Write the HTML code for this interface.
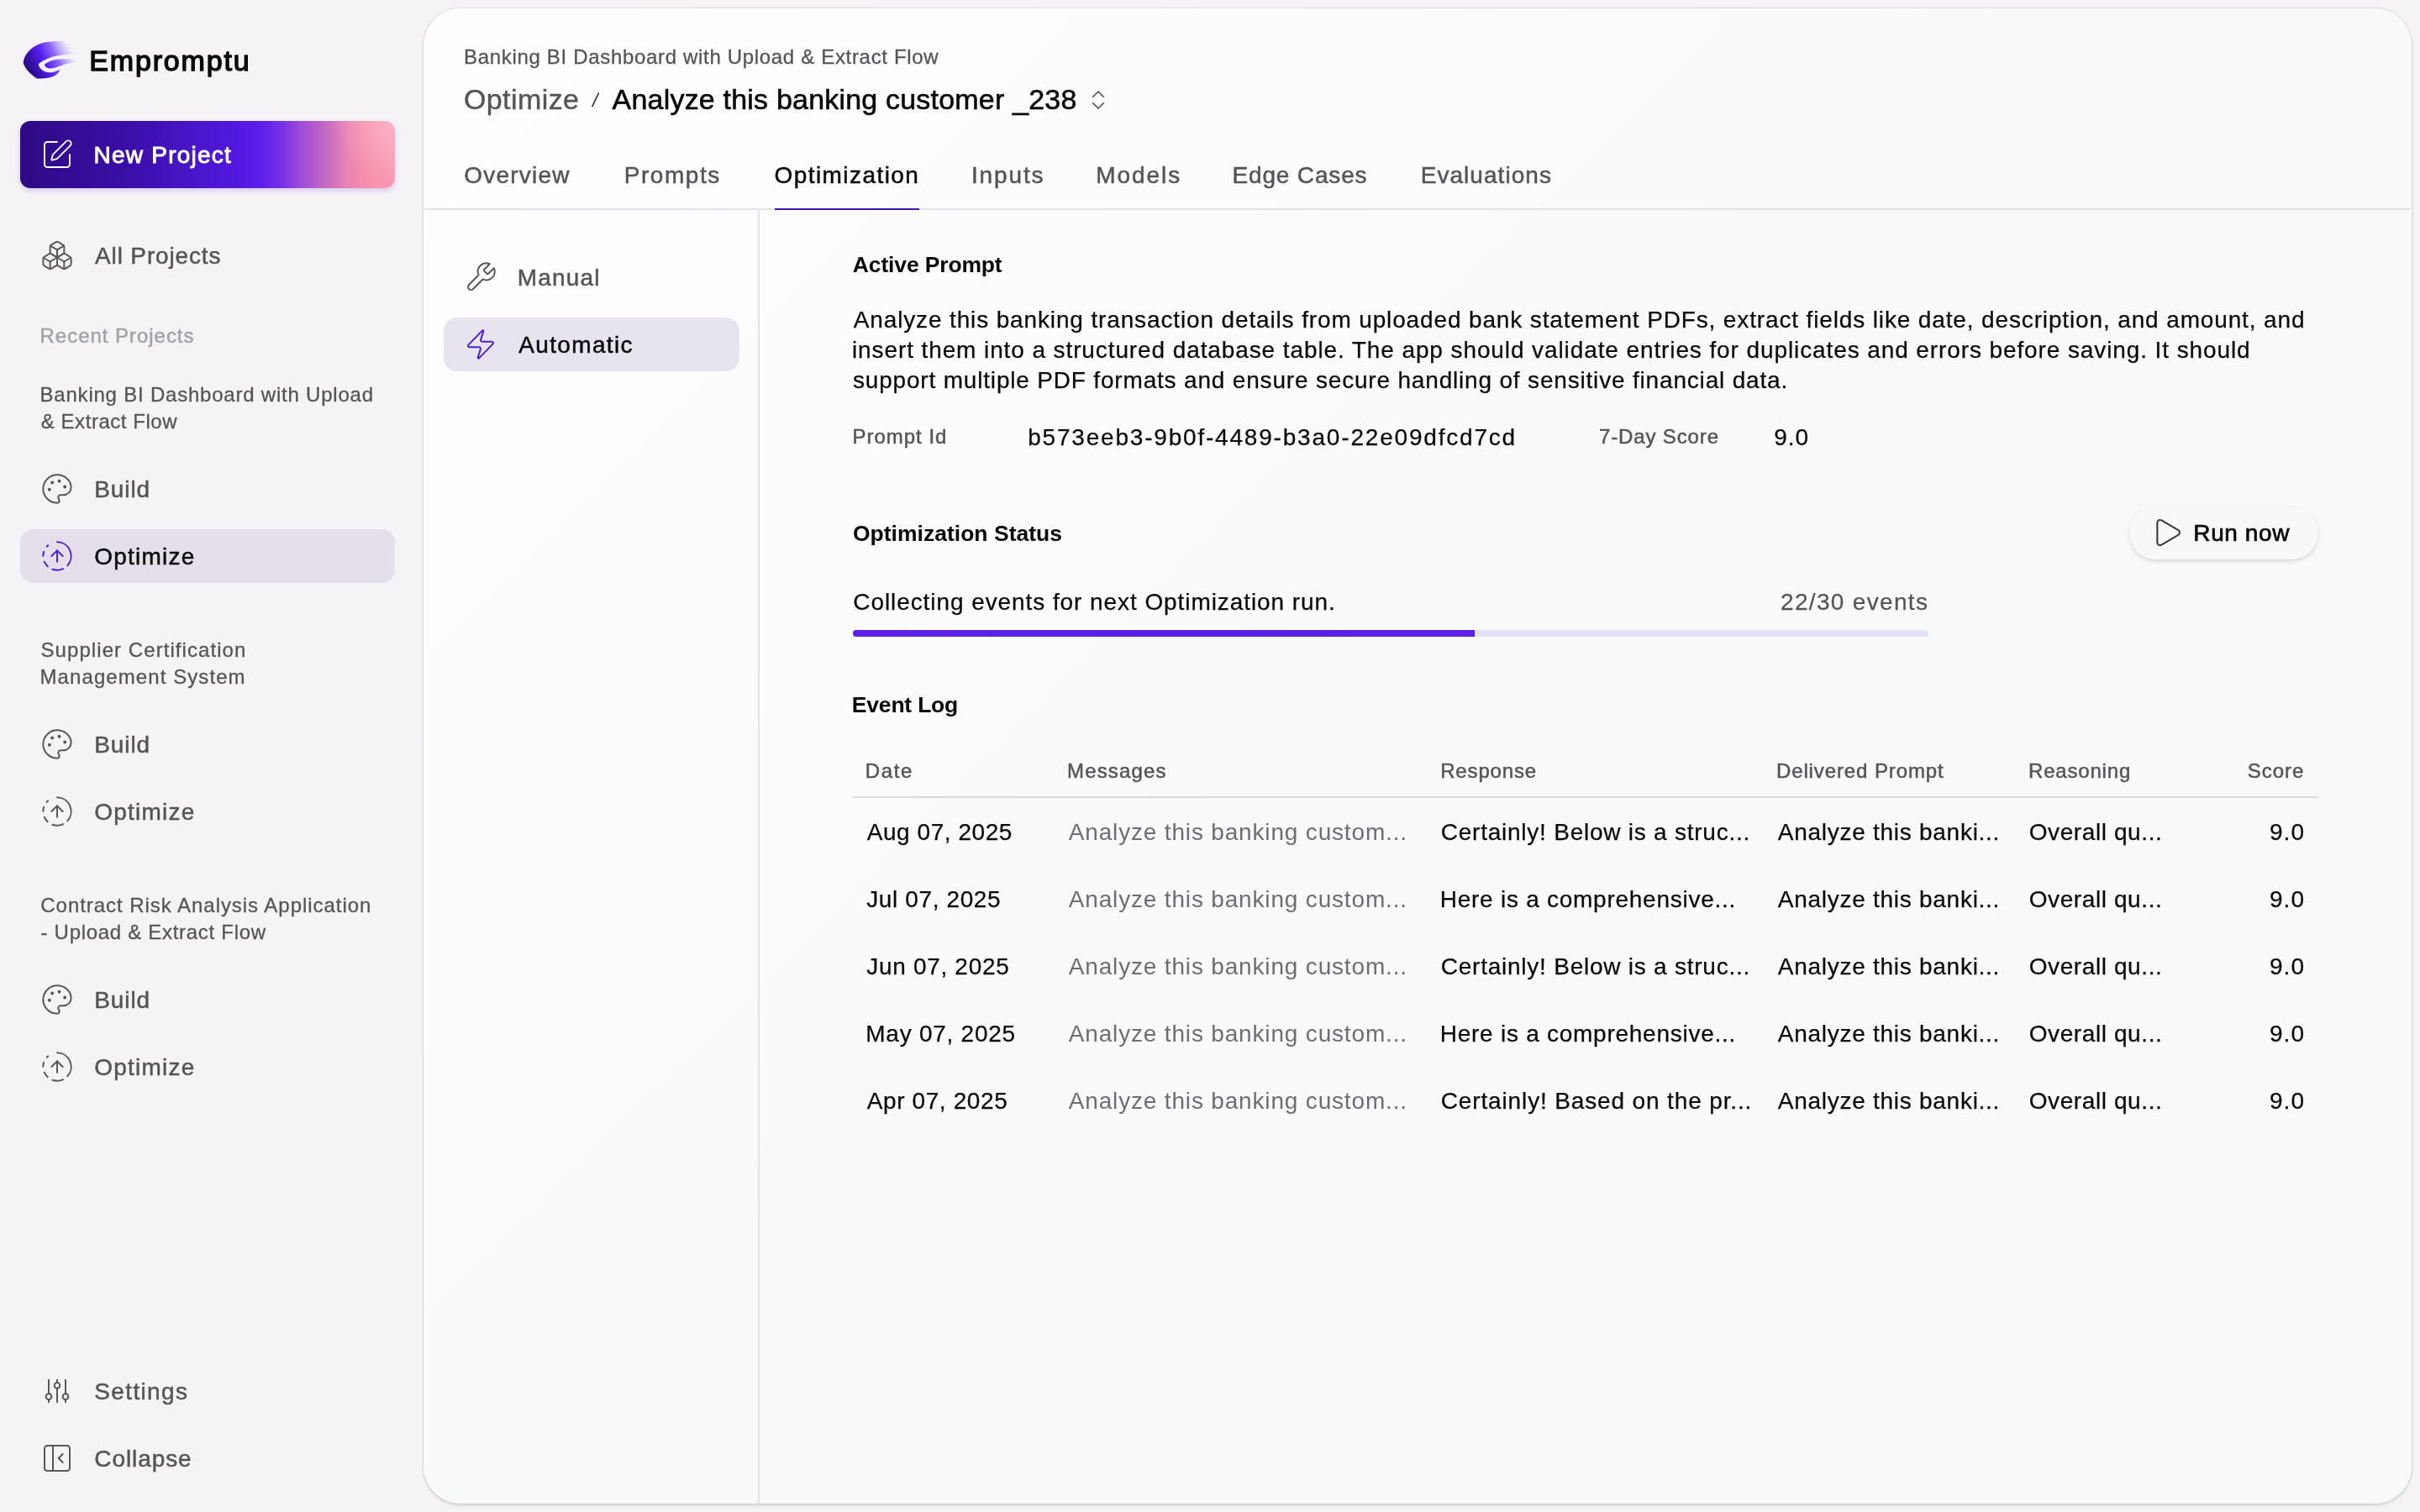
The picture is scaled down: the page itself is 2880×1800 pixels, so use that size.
<!DOCTYPE html>
<html lang="en"><head><meta charset="utf-8"><title>Empromptu - Optimize</title>
<style>
html,body{margin:0;padding:0;}
body{width:2880px;height:1800px;overflow:hidden;position:relative;background:#f5f3f6;font-family:"Liberation Sans",sans-serif;}
.t{position:absolute;white-space:nowrap;display:block;-webkit-font-smoothing:antialiased;}
.i{position:absolute;display:block;overflow:visible;}
.b{position:absolute;display:block;}
#w{position:absolute;left:0;top:0;width:2880px;height:1800px;will-change:transform;}
</style></head><body><div id="w">
<div class="b" style="left:504px;top:10px;width:2366px;height:1780px;background:linear-gradient(135deg,#fefdff 0%,#fcfcfd 25%,#f8faf9 45%,#f8f9f9 100%);border-radius:44px;box-shadow:0 0 0 1.5px rgba(0,0,20,0.075), 0 3px 4px rgba(0,0,0,0.09);"></div>
<div class="b" style="left:505px;top:248px;width:2364px;height:2px;background:#e2e2e6;"></div>
<div class="b" style="left:902px;top:250px;width:2px;height:1540px;background:#e3e3e6;"></div>
<div class="b" style="left:922px;top:248px;width:172px;height:2px;background:#3d19a8;"></div>
<svg class="i" style="left:20px;top:40px" width="90" height="60" viewBox="20 40 90 60"><defs><linearGradient id="lg" gradientUnits="userSpaceOnUse" x1="29" y1="88" x2="89" y2="57"><stop offset="0" stop-color="#220967"/><stop offset=".2" stop-color="#370fa6"/><stop offset=".42" stop-color="#571ef0"/><stop offset=".64" stop-color="#8f6af6"/><stop offset=".85" stop-color="#c6b7fa" stop-opacity=".55"/><stop offset="1" stop-color="#e4dcfc" stop-opacity="0"/></linearGradient></defs><path fill="url(#lg)" d="M27.9 72.9C29.5 64 37 56 47.8 51.9C57 48.8 68 48.6 78 49.3L73 51.6L84.5 52.6L77 55.2L88 57.6L80 60L88.5 61.5L84 64.8C76 64.8 65 66.2 55.7 70.2C50 72.7 46.2 75 45.8 77.3C46.4 80.5 49.5 83.4 53.5 85.3C58 87.3 64 86.3 71.6 82.7C70 86.5 67 89.2 63.7 90.8C58 93.4 50 93.8 43.8 93.2C38 90 32 84 29.5 79C28 76.5 27.7 74.5 27.9 72.9Z"/><path fill="url(#lg)" d="M52.9 77.3C55 74.5 60 72 66 70.9C72 69.9 79 70 84 70.6C87 71 90 72.3 91.4 73.7C86 74.2 80 75.3 75 77.3C69 79.8 63 81.8 58.5 81.4C55.5 81 53.5 79.3 52.9 77.3Z"/><path d="M37 83L44 93.4" stroke="#2a0b78" stroke-width="1" fill="none" stroke-linecap="round"/></svg>
<span class="t" style="left:106.25px;top:55px;font-size:34px;line-height:34px;color:#09090b;letter-spacing:1.844px;-webkit-text-stroke:1.4px #09090b;">Empromptu</span>
<div class="b" style="left:24px;top:144px;width:446px;height:80px;border-radius:12px;background:radial-gradient(circle at 100% 0%,rgba(255,200,215,0.55) 0%,rgba(255,200,215,0) 16%),linear-gradient(90deg,#2d0a84 0%,#3a0ea6 28%,#5118dc 56%,#5a1eea 64%,#7a30e6 70%,#a44fd6 75.6%,#c267c6 81%,#e582b4 86.7%,#f58fa9 92%,#f99ab0 100%);box-shadow:0 3px 6px rgba(120,60,200,0.22);"></div>
<svg class="i" style="left:48.00px;top:164.00px;color:#ffffff" width="40" height="40" viewBox="0 0 24 24" fill="none" stroke="currentColor" stroke-width="1.1" stroke-linecap="round" stroke-linejoin="round"><path d="M12 3H5a2 2 0 0 0-2 2v14a2 2 0 0 0 2 2h14a2 2 0 0 0 2-2v-7"/><path d="M18.375 2.625a1 1 0 0 1 3 3l-9.013 9.014a2 2 0 0 1-.853.505l-2.873.84a.5.5 0 0 1-.62-.62l.84-2.873a2 2 0 0 1 .506-.852z"/></svg>
<span class="t" style="left:111.50px;top:171px;font-size:28px;line-height:28px;color:#ffffff;letter-spacing:1.235px;-webkit-text-stroke:0.9px #ffffff;">New Project</span>
<svg class="i" style="left:48.00px;top:284.00px;color:#58585c" width="40" height="40" viewBox="0 0 24 24" fill="none" stroke="currentColor" stroke-width="1.2" stroke-linecap="round" stroke-linejoin="round"><path d="M2.97 12.92A2 2 0 0 0 2 14.63v3.24a2 2 0 0 0 .97 1.71l3 1.8a2 2 0 0 0 2.06 0L12 19v-5.5l-5-3-4.03 2.42Z"/><path d="m7 16.5-4.74-2.85"/><path d="m7 16.5 5-3"/><path d="M7 16.5v5.17"/><path d="M12 13.5V19l3.97 2.38a2 2 0 0 0 2.06 0l3-1.8a2 2 0 0 0 .97-1.71v-3.24a2 2 0 0 0-.97-1.71L17 10.5l-5 3Z"/><path d="m17 16.5-5-3"/><path d="m17 16.5 4.74-2.85"/><path d="M17 16.5v5.17"/><path d="M7.97 4.42A2 2 0 0 0 7 6.13v4.37l5 3 5-3V6.13a2 2 0 0 0-.97-1.71l-3-1.8a2 2 0 0 0-2.06 0l-3 1.8Z"/><path d="M12 8 7.26 5.15"/><path d="m12 8 4.74-2.85"/><path d="M12 13.5V8"/></svg>
<span class="t" style="left:113.05px;top:291px;font-size:28px;line-height:28px;color:#555558;letter-spacing:0.855px;-webkit-text-stroke:0.5px #555558;">All Projects</span>
<span class="t" style="left:47.55px;top:388px;font-size:24px;line-height:24px;color:#a2a2a8;letter-spacing:0.968px;-webkit-text-stroke:0.5px #a2a2a8;">Recent Projects</span>
<span class="t" style="left:47.55px;top:458px;font-size:24px;line-height:24px;color:#555558;letter-spacing:0.782px;-webkit-text-stroke:0.3px #555558;">Banking BI Dashboard with Upload</span>
<span class="t" style="left:48.80px;top:490px;font-size:24px;line-height:24px;color:#555558;letter-spacing:0.546px;-webkit-text-stroke:0.3px #555558;">&amp; Extract Flow</span>
<svg class="i" style="left:48.00px;top:562.00px;color:#58585c" width="40" height="40" viewBox="0 0 24 24" fill="none" stroke="currentColor" stroke-width="1.2" stroke-linecap="round" stroke-linejoin="round"><circle cx="13.5" cy="6.5" r=".6" fill="currentColor"/><circle cx="17.5" cy="10.5" r=".6" fill="currentColor"/><circle cx="8.5" cy="7.5" r=".6" fill="currentColor"/><circle cx="6.5" cy="12.5" r=".6" fill="currentColor"/><path d="M12 2C6.5 2 2 6.5 2 12s4.5 10 10 10c.926 0 1.648-.746 1.648-1.688 0-.437-.18-.835-.437-1.125-.29-.289-.438-.652-.438-1.125a1.64 1.64 0 0 1 1.668-1.668h1.996c3.051 0 5.555-2.503 5.555-5.554C21.965 6.012 17.461 2 12 2z"/></svg>
<span class="t" style="left:112.30px;top:569px;font-size:28px;line-height:28px;color:#555558;letter-spacing:0.887px;-webkit-text-stroke:0.5px #555558;">Build</span>
<div class="b" style="left:24px;top:630.0px;width:446px;height:64px;border-radius:16px;background:#e4dfea;"></div>
<svg class="i" style="left:48.00px;top:642.00px;color:#4f1fd6" width="40" height="40" viewBox="0 0 24 24" fill="none" stroke="currentColor" stroke-width="1.2" stroke-linecap="round" stroke-linejoin="round"><path d="M12 2a10 10 0 0 1 7.38 16.75"/><path d="m16 12-4-4-4 4"/><path d="M12 16V8"/><path d="M2.5 8.875a10 10 0 0 0-.5 3"/><path d="M2.83 16a10 10 0 0 0 2.43 3.4"/><path d="M4.636 5.235a10 10 0 0 1 .891-.857"/><path d="M8.644 21.42a10 10 0 0 0 7.631-.38"/></svg>
<span class="t" style="left:112.30px;top:649px;font-size:28px;line-height:28px;color:#0a0a0a;letter-spacing:1.221px;-webkit-text-stroke:0.5px #0a0a0a;">Optimize</span>
<span class="t" style="left:48.55px;top:762px;font-size:24px;line-height:24px;color:#555558;letter-spacing:1.064px;-webkit-text-stroke:0.3px #555558;">Supplier Certification</span>
<span class="t" style="left:47.55px;top:794px;font-size:24px;line-height:24px;color:#555558;letter-spacing:1.078px;-webkit-text-stroke:0.3px #555558;">Management System</span>
<svg class="i" style="left:48.00px;top:866.00px;color:#58585c" width="40" height="40" viewBox="0 0 24 24" fill="none" stroke="currentColor" stroke-width="1.2" stroke-linecap="round" stroke-linejoin="round"><circle cx="13.5" cy="6.5" r=".6" fill="currentColor"/><circle cx="17.5" cy="10.5" r=".6" fill="currentColor"/><circle cx="8.5" cy="7.5" r=".6" fill="currentColor"/><circle cx="6.5" cy="12.5" r=".6" fill="currentColor"/><path d="M12 2C6.5 2 2 6.5 2 12s4.5 10 10 10c.926 0 1.648-.746 1.648-1.688 0-.437-.18-.835-.437-1.125-.29-.289-.438-.652-.438-1.125a1.64 1.64 0 0 1 1.668-1.668h1.996c3.051 0 5.555-2.503 5.555-5.554C21.965 6.012 17.461 2 12 2z"/></svg>
<span class="t" style="left:112.30px;top:873px;font-size:28px;line-height:28px;color:#555558;letter-spacing:0.887px;-webkit-text-stroke:0.5px #555558;">Build</span>
<svg class="i" style="left:48.00px;top:946.00px;color:#58585c" width="40" height="40" viewBox="0 0 24 24" fill="none" stroke="currentColor" stroke-width="1.2" stroke-linecap="round" stroke-linejoin="round"><path d="M12 2a10 10 0 0 1 7.38 16.75"/><path d="m16 12-4-4-4 4"/><path d="M12 16V8"/><path d="M2.5 8.875a10 10 0 0 0-.5 3"/><path d="M2.83 16a10 10 0 0 0 2.43 3.4"/><path d="M4.636 5.235a10 10 0 0 1 .891-.857"/><path d="M8.644 21.42a10 10 0 0 0 7.631-.38"/></svg>
<span class="t" style="left:112.30px;top:953px;font-size:28px;line-height:28px;color:#555558;letter-spacing:1.221px;-webkit-text-stroke:0.5px #555558;">Optimize</span>
<span class="t" style="left:48.30px;top:1066px;font-size:24px;line-height:24px;color:#555558;letter-spacing:0.956px;-webkit-text-stroke:0.3px #555558;">Contract Risk Analysis Application</span>
<span class="t" style="left:48.55px;top:1098px;font-size:24px;line-height:24px;color:#555558;letter-spacing:0.702px;-webkit-text-stroke:0.3px #555558;">- Upload &amp; Extract Flow</span>
<svg class="i" style="left:48.00px;top:1170.20px;color:#58585c" width="40" height="40" viewBox="0 0 24 24" fill="none" stroke="currentColor" stroke-width="1.2" stroke-linecap="round" stroke-linejoin="round"><circle cx="13.5" cy="6.5" r=".6" fill="currentColor"/><circle cx="17.5" cy="10.5" r=".6" fill="currentColor"/><circle cx="8.5" cy="7.5" r=".6" fill="currentColor"/><circle cx="6.5" cy="12.5" r=".6" fill="currentColor"/><path d="M12 2C6.5 2 2 6.5 2 12s4.5 10 10 10c.926 0 1.648-.746 1.648-1.688 0-.437-.18-.835-.437-1.125-.29-.289-.438-.652-.438-1.125a1.64 1.64 0 0 1 1.668-1.668h1.996c3.051 0 5.555-2.503 5.555-5.554C21.965 6.012 17.461 2 12 2z"/></svg>
<span class="t" style="left:112.30px;top:1177px;font-size:28px;line-height:28px;color:#555558;letter-spacing:0.887px;-webkit-text-stroke:0.5px #555558;">Build</span>
<svg class="i" style="left:48.00px;top:1250.20px;color:#58585c" width="40" height="40" viewBox="0 0 24 24" fill="none" stroke="currentColor" stroke-width="1.2" stroke-linecap="round" stroke-linejoin="round"><path d="M12 2a10 10 0 0 1 7.38 16.75"/><path d="m16 12-4-4-4 4"/><path d="M12 16V8"/><path d="M2.5 8.875a10 10 0 0 0-.5 3"/><path d="M2.83 16a10 10 0 0 0 2.43 3.4"/><path d="M4.636 5.235a10 10 0 0 1 .891-.857"/><path d="M8.644 21.42a10 10 0 0 0 7.631-.38"/></svg>
<span class="t" style="left:112.30px;top:1257px;font-size:28px;line-height:28px;color:#555558;letter-spacing:1.221px;-webkit-text-stroke:0.5px #555558;">Optimize</span>
<svg class="i" style="left:48.00px;top:1636.00px;color:#58585c" width="40" height="40" viewBox="0 0 24 24" fill="none" stroke="currentColor" stroke-width="1.2" stroke-linecap="round" stroke-linejoin="round"><path d="M6 4v10"/><circle cx="6" cy="16" r="2"/><path d="M6 18v2"/><path d="M12 4v2"/><circle cx="12" cy="8" r="2"/><path d="M12 10v10"/><path d="M18 4v10"/><circle cx="18" cy="16" r="2"/><path d="M18 18v2"/></svg>
<span class="t" style="left:112.30px;top:1643px;font-size:28px;line-height:28px;color:#555558;letter-spacing:1.357px;-webkit-text-stroke:0.5px #555558;">Settings</span>
<svg class="i" style="left:48.00px;top:1716.00px;color:#58585c" width="40" height="40" viewBox="0 0 24 24" fill="none" stroke="currentColor" stroke-width="1.2" stroke-linecap="round" stroke-linejoin="round"><rect width="18" height="18" x="3" y="3" rx="2"/><path d="M9 3v18"/><path d="m16 15-3-3 3-3"/></svg>
<span class="t" style="left:112.30px;top:1723px;font-size:28px;line-height:28px;color:#555558;letter-spacing:0.921px;-webkit-text-stroke:0.5px #555558;">Collapse</span>
<span class="t" style="left:552.05px;top:56px;font-size:24px;line-height:24px;color:#555558;letter-spacing:0.675px;-webkit-text-stroke:0.3px #555558;">Banking BI Dashboard with Upload &amp; Extract Flow</span>
<span class="t" style="left:551.90px;top:101px;font-size:34px;line-height:34px;color:#555558;letter-spacing:0.421px;-webkit-text-stroke:0.4px #555558;">Optimize</span>
<svg class="i" style="left:700px;top:106px" width="18" height="26" viewBox="700 106 18 26"><path d="M704.9 126.6L712.3 111" stroke="#2c2c30" stroke-width="1.6" stroke-linecap="round" fill="none"/></svg>
<span class="t" style="left:728.60px;top:101px;font-size:34px;line-height:34px;color:#0a0a0a;letter-spacing:0.198px;-webkit-text-stroke:0.6px #0a0a0a;">Analyze this banking customer _238</span>
<svg class="i" style="left:1292.30px;top:104.00px;color:#555558" width="30" height="30" viewBox="0 0 24 24" fill="none" stroke="currentColor" stroke-width="1.4" stroke-linecap="round" stroke-linejoin="round"><path d="m7 15 5 5 5-5"/><path d="m7 9 5-5 5 5"/></svg>
<span class="t" style="left:552.20px;top:195px;font-size:28px;line-height:28px;color:#555558;letter-spacing:1.229px;-webkit-text-stroke:0.5px #555558;">Overview</span>
<span class="t" style="left:742.70px;top:195px;font-size:28px;line-height:28px;color:#555558;letter-spacing:1.550px;-webkit-text-stroke:0.5px #555558;">Prompts</span>
<span class="t" style="left:921.50px;top:195px;font-size:28px;line-height:28px;color:#0a0a0a;letter-spacing:1.436px;-webkit-text-stroke:0.5px #0a0a0a;">Optimization</span>
<span class="t" style="left:1155.95px;top:195px;font-size:28px;line-height:28px;color:#555558;letter-spacing:1.870px;-webkit-text-stroke:0.5px #555558;">Inputs</span>
<span class="t" style="left:1304.30px;top:195px;font-size:28px;line-height:28px;color:#555558;letter-spacing:1.920px;-webkit-text-stroke:0.5px #555558;">Models</span>
<span class="t" style="left:1466.50px;top:195px;font-size:28px;line-height:28px;color:#555558;letter-spacing:0.839px;-webkit-text-stroke:0.5px #555558;">Edge Cases</span>
<span class="t" style="left:1690.70px;top:195px;font-size:28px;line-height:28px;color:#555558;letter-spacing:1.050px;-webkit-text-stroke:0.5px #555558;">Evaluations</span>
<svg class="i" style="left:552.00px;top:310.20px;color:#58585c" width="40" height="40" viewBox="0 0 24 24" fill="none" stroke="currentColor" stroke-width="1.2" stroke-linecap="round" stroke-linejoin="round"><path d="M14.7 6.3a1 1 0 0 0 0 1.4l1.6 1.6a1 1 0 0 0 1.4 0l3.77-3.77a6 6 0 0 1-7.94 7.94l-6.91 6.91a2.12 2.12 0 0 1-3-3l6.91-6.91a6 6 0 0 1 7.94-7.94l-3.76 3.76z"/></svg>
<span class="t" style="left:615.70px;top:317px;font-size:28px;line-height:28px;color:#555558;letter-spacing:1.210px;-webkit-text-stroke:0.5px #555558;">Manual</span>
<div class="b" style="left:528px;top:378px;width:352px;height:64px;border-radius:16px;background:#e7e4f0;"></div>
<svg class="i" style="left:552.00px;top:390.00px;color:#4f1fd6" width="40" height="40" viewBox="0 0 24 24" fill="none" stroke="currentColor" stroke-width="1.2" stroke-linecap="round" stroke-linejoin="round"><path d="M4 14a1 1 0 0 1-.78-1.63l9.9-10.2a.5.5 0 0 1 .86.46l-1.92 6.02A1 1 0 0 0 13 10h7a1 1 0 0 1 .78 1.63l-9.9 10.2a.5.5 0 0 1-.86-.46l1.92-6.02A1 1 0 0 0 11 14z"/></svg>
<span class="t" style="left:617.35px;top:397px;font-size:28px;line-height:28px;color:#0a0a0a;letter-spacing:1.331px;-webkit-text-stroke:0.5px #0a0a0a;">Automatic</span>
<span class="t" style="left:1014.85px;top:302px;font-size:26.5px;line-height:27px;color:#0a0a0a;letter-spacing:-0.150px;font-weight:700;">Active Prompt</span>
<span class="t" style="left:1015.73px;top:367px;font-size:28px;line-height:28px;color:#0a0a0a;letter-spacing:0.862px;-webkit-text-stroke:0.25px #0a0a0a;">Analyze this banking transaction details from uploaded bank statement PDFs, extract fields like date, description, and amount, and</span>
<span class="t" style="left:1013.98px;top:403px;font-size:28px;line-height:28px;color:#0a0a0a;letter-spacing:0.897px;-webkit-text-stroke:0.25px #0a0a0a;">insert them into a structured database table. The app should validate entries for duplicates and errors before saving. It should</span>
<span class="t" style="left:1014.98px;top:439px;font-size:28px;line-height:28px;color:#0a0a0a;letter-spacing:0.818px;-webkit-text-stroke:0.25px #0a0a0a;">support multiple PDF formats and ensure secure handling of sensitive financial data.</span>
<span class="t" style="left:1014.55px;top:508px;font-size:24px;line-height:24px;color:#555558;letter-spacing:0.975px;-webkit-text-stroke:0.5px #555558;">Prompt Id</span>
<span class="t" style="left:1223.17px;top:507px;font-size:28px;line-height:28px;color:#0a0a0a;letter-spacing:1.803px;-webkit-text-stroke:0.25px #0a0a0a;">b573eeb3-9b0f-4489-b3a0-22e09dfcd7cd</span>
<span class="t" style="left:1903.00px;top:508px;font-size:24px;line-height:24px;color:#555558;letter-spacing:0.860px;-webkit-text-stroke:0.5px #555558;">7-Day Score</span>
<span class="t" style="left:2111.28px;top:507px;font-size:28px;line-height:28px;color:#0a0a0a;letter-spacing:0.925px;-webkit-text-stroke:0.25px #0a0a0a;">9.0</span>
<span class="t" style="left:1014.90px;top:622px;font-size:26.5px;line-height:27px;color:#0a0a0a;letter-spacing:0.019px;font-weight:700;">Optimization Status</span>
<div class="b" style="left:2534px;top:603px;width:225px;height:63px;border-radius:32px;background:#f7f8f8;box-shadow:0 0 1px rgba(0,0,0,0.10),0 3px 5px rgba(0,0,0,0.11);"></div>
<svg class="i" style="left:2558.50px;top:613.50px;color:#3a3a3c" width="40" height="40" viewBox="0 0 24 24" fill="none" stroke="currentColor" stroke-width="1.25" stroke-linecap="round" stroke-linejoin="round"><path d="M5 5a2 2 0 0 1 3.008-1.728l11.997 6.998a2 2 0 0 1 .003 3.458l-12 7A2 2 0 0 1 5 19z"/></svg>
<span class="t" style="left:2610.30px;top:621px;font-size:28px;line-height:28px;color:#0a0a0a;letter-spacing:0.608px;-webkit-text-stroke:0.7px #0a0a0a;">Run now</span>
<span class="t" style="left:1015.27px;top:703px;font-size:28px;line-height:28px;color:#0a0a0a;letter-spacing:0.924px;-webkit-text-stroke:0.25px #0a0a0a;">Collecting events for next Optimization run.</span>
<span class="t" style="left:2119.07px;top:703px;font-size:28px;line-height:28px;color:#555558;letter-spacing:1.323px;-webkit-text-stroke:0.25px #555558;">22/30 events</span>
<div class="b" style="left:1015px;top:750px;width:1280px;height:8px;border-radius:4px;background:#e6e0f8;"></div>
<div class="b" style="left:1015px;top:750px;width:740px;height:8px;border-radius:4px 0 0 4px;background:#5b21e6;"></div>
<span class="t" style="left:1013.85px;top:826px;font-size:26.5px;line-height:27px;color:#0a0a0a;letter-spacing:-0.206px;font-weight:700;">Event Log</span>
<span class="t" style="left:1029.85px;top:906px;font-size:24px;line-height:24px;color:#555558;letter-spacing:1.600px;-webkit-text-stroke:0.5px #555558;">Date</span>
<span class="t" style="left:1270.05px;top:906px;font-size:24px;line-height:24px;color:#555558;letter-spacing:1.150px;-webkit-text-stroke:0.5px #555558;">Messages</span>
<span class="t" style="left:1714.15px;top:906px;font-size:24px;line-height:24px;color:#555558;letter-spacing:0.857px;-webkit-text-stroke:0.5px #555558;">Response</span>
<span class="t" style="left:2113.95px;top:906px;font-size:24px;line-height:24px;color:#555558;letter-spacing:0.890px;-webkit-text-stroke:0.5px #555558;">Delivered Prompt</span>
<span class="t" style="left:2414.05px;top:906px;font-size:24px;line-height:24px;color:#555558;letter-spacing:0.806px;-webkit-text-stroke:0.5px #555558;">Reasoning</span>
<span class="t" style="left:2674.65px;top:906px;font-size:24px;line-height:24px;color:#555558;letter-spacing:1.025px;-webkit-text-stroke:0.5px #555558;">Score</span>
<div class="b" style="left:1015px;top:948px;width:1744px;height:2px;background:#d9dadc;"></div>
<span class="t" style="left:1031.72px;top:977px;font-size:28px;line-height:28px;color:#0a0a0a;letter-spacing:0.550px;-webkit-text-stroke:0.25px #0a0a0a;">Aug 07, 2025</span>
<span class="t" style="left:1271.80px;top:977px;font-size:28px;line-height:28px;color:#6e6e72;letter-spacing:0.829px;">Analyze this banking custom...</span>
<span class="t" style="left:1714.78px;top:977px;font-size:28px;line-height:28px;color:#0a0a0a;letter-spacing:0.762px;-webkit-text-stroke:0.25px #0a0a0a;">Certainly! Below is a struc...</span>
<span class="t" style="left:2115.82px;top:977px;font-size:28px;line-height:28px;color:#0a0a0a;letter-spacing:0.728px;-webkit-text-stroke:0.25px #0a0a0a;">Analyze this banki...</span>
<span class="t" style="left:2414.68px;top:977px;font-size:28px;line-height:28px;color:#0a0a0a;letter-spacing:0.600px;-webkit-text-stroke:0.25px #0a0a0a;">Overall qu...</span>
<span class="t" style="left:2700.88px;top:977px;font-size:28px;line-height:28px;color:#0a0a0a;letter-spacing:1.125px;-webkit-text-stroke:0.25px #0a0a0a;">9.0</span>
<span class="t" style="left:1031.22px;top:1057px;font-size:28px;line-height:28px;color:#0a0a0a;letter-spacing:0.623px;-webkit-text-stroke:0.25px #0a0a0a;">Jul 07, 2025</span>
<span class="t" style="left:1271.80px;top:1057px;font-size:28px;line-height:28px;color:#6e6e72;letter-spacing:0.829px;">Analyze this banking custom...</span>
<span class="t" style="left:1713.78px;top:1057px;font-size:28px;line-height:28px;color:#0a0a0a;letter-spacing:0.740px;-webkit-text-stroke:0.25px #0a0a0a;">Here is a comprehensive...</span>
<span class="t" style="left:2115.82px;top:1057px;font-size:28px;line-height:28px;color:#0a0a0a;letter-spacing:0.728px;-webkit-text-stroke:0.25px #0a0a0a;">Analyze this banki...</span>
<span class="t" style="left:2414.68px;top:1057px;font-size:28px;line-height:28px;color:#0a0a0a;letter-spacing:0.600px;-webkit-text-stroke:0.25px #0a0a0a;">Overall qu...</span>
<span class="t" style="left:2700.88px;top:1057px;font-size:28px;line-height:28px;color:#0a0a0a;letter-spacing:1.125px;-webkit-text-stroke:0.25px #0a0a0a;">9.0</span>
<span class="t" style="left:1031.22px;top:1137px;font-size:28px;line-height:28px;color:#0a0a0a;letter-spacing:0.691px;-webkit-text-stroke:0.25px #0a0a0a;">Jun 07, 2025</span>
<span class="t" style="left:1271.80px;top:1137px;font-size:28px;line-height:28px;color:#6e6e72;letter-spacing:0.829px;">Analyze this banking custom...</span>
<span class="t" style="left:1714.78px;top:1137px;font-size:28px;line-height:28px;color:#0a0a0a;letter-spacing:0.762px;-webkit-text-stroke:0.25px #0a0a0a;">Certainly! Below is a struc...</span>
<span class="t" style="left:2115.82px;top:1137px;font-size:28px;line-height:28px;color:#0a0a0a;letter-spacing:0.728px;-webkit-text-stroke:0.25px #0a0a0a;">Analyze this banki...</span>
<span class="t" style="left:2414.68px;top:1137px;font-size:28px;line-height:28px;color:#0a0a0a;letter-spacing:0.600px;-webkit-text-stroke:0.25px #0a0a0a;">Overall qu...</span>
<span class="t" style="left:2700.88px;top:1137px;font-size:28px;line-height:28px;color:#0a0a0a;letter-spacing:1.125px;-webkit-text-stroke:0.25px #0a0a0a;">9.0</span>
<span class="t" style="left:1030.28px;top:1217px;font-size:28px;line-height:28px;color:#0a0a0a;letter-spacing:0.745px;-webkit-text-stroke:0.25px #0a0a0a;">May 07, 2025</span>
<span class="t" style="left:1271.80px;top:1217px;font-size:28px;line-height:28px;color:#6e6e72;letter-spacing:0.829px;">Analyze this banking custom...</span>
<span class="t" style="left:1713.78px;top:1217px;font-size:28px;line-height:28px;color:#0a0a0a;letter-spacing:0.740px;-webkit-text-stroke:0.25px #0a0a0a;">Here is a comprehensive...</span>
<span class="t" style="left:2115.82px;top:1217px;font-size:28px;line-height:28px;color:#0a0a0a;letter-spacing:0.728px;-webkit-text-stroke:0.25px #0a0a0a;">Analyze this banki...</span>
<span class="t" style="left:2414.68px;top:1217px;font-size:28px;line-height:28px;color:#0a0a0a;letter-spacing:0.600px;-webkit-text-stroke:0.25px #0a0a0a;">Overall qu...</span>
<span class="t" style="left:2700.88px;top:1217px;font-size:28px;line-height:28px;color:#0a0a0a;letter-spacing:1.125px;-webkit-text-stroke:0.25px #0a0a0a;">9.0</span>
<span class="t" style="left:1031.72px;top:1297px;font-size:28px;line-height:28px;color:#0a0a0a;letter-spacing:0.609px;-webkit-text-stroke:0.25px #0a0a0a;">Apr 07, 2025</span>
<span class="t" style="left:1271.80px;top:1297px;font-size:28px;line-height:28px;color:#6e6e72;letter-spacing:0.829px;">Analyze this banking custom...</span>
<span class="t" style="left:1714.78px;top:1297px;font-size:28px;line-height:28px;color:#0a0a0a;letter-spacing:0.861px;-webkit-text-stroke:0.25px #0a0a0a;">Certainly! Based on the pr...</span>
<span class="t" style="left:2115.82px;top:1297px;font-size:28px;line-height:28px;color:#0a0a0a;letter-spacing:0.728px;-webkit-text-stroke:0.25px #0a0a0a;">Analyze this banki...</span>
<span class="t" style="left:2414.68px;top:1297px;font-size:28px;line-height:28px;color:#0a0a0a;letter-spacing:0.600px;-webkit-text-stroke:0.25px #0a0a0a;">Overall qu...</span>
<span class="t" style="left:2700.88px;top:1297px;font-size:28px;line-height:28px;color:#0a0a0a;letter-spacing:1.125px;-webkit-text-stroke:0.25px #0a0a0a;">9.0</span>
</div>
<script>
(function(){try{var d=window.devicePixelRatio||1,w=window.innerWidth||0;if(d>1.01&&Math.abs(w*d-2880)<4){var e=document.getElementById('w'),k=1/d;e.style.transformOrigin='0 0';e.style.transform='scale('+k+')';document.body.style.width=(2880*k)+'px';document.body.style.height=(1800*k)+'px';}}catch(x){}})();
</script>
</body></html>
